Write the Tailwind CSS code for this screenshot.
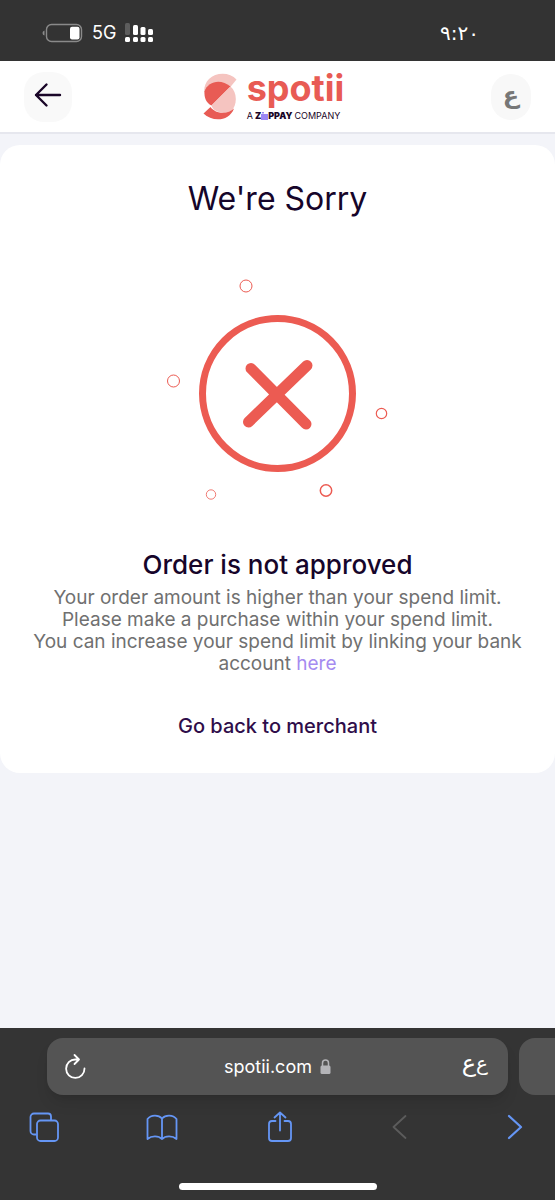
<!DOCTYPE html>
<html lang="en">
<head>
<meta charset="utf-8">
<meta name="viewport" content="width=device-width, initial-scale=1">
<title>Spotii</title>
<script src="https://cdn.jsdelivr.net/npm/@tailwindcss/browser@4"></script>
</head>
<body class="flex min-h-screen flex-col bg-[#f3f4f9] font-['Inter','DejaVu_Sans',sans-serif]">

<!-- Phone status bar -->
<div class="flex h-[61px] items-center justify-between bg-[#333333] pt-1 pr-19 pl-[42px] text-white">
  <div class="flex items-center gap-2">
    <svg class="h-5 w-[42px]" viewBox="0 0 42 20" fill="none" aria-label="Battery" role="img">
      <path d="M2.5 7.5Q.5 8 .5 10T2.500 12.500Z" fill="#8a8a8a"/>
      <rect x="4.500" y="1.500" width="35" height="17" rx="5" stroke="#8a8a8a" stroke-width="1.400"/>
      <rect x="28" y="3.700" width="9.500" height="12.800" rx="2" fill="#fff"/>
    </svg>
    <span class="text-lg">5G</span>
    <svg class="h-5 w-[30px]" viewBox="0 0 30 20" fill="#fff" aria-label="Signal" role="img">
      <rect x="1" y="0" width="5" height="12" rx="1.500" fill="#5d5d5d"/>
      <rect x="9" y="2" width="5" height="10" rx="1.500"/>
      <rect x="16.500" y="4" width="5" height="8" rx="1.500"/>
      <rect x="24" y="6" width="5" height="6" rx="1.500"/>
      <rect x="1" y="14" width="5" height="5" rx="1.500"/>
      <rect x="9" y="14" width="5" height="5" rx="1.500"/>
      <rect x="16.500" y="14" width="5" height="5" rx="1.500"/>
      <rect x="24" y="14" width="5" height="5" rx="1.500"/>
    </svg>
  </div>
  <span class="font-['DejaVu_Sans',sans-serif] text-xl">٩:٢٠</span>
</div>

<!-- Site header -->
<header class="grid h-[73px] grid-cols-[1fr_auto_1fr] items-center border-b-2 border-[#e6e7ee] bg-white px-6">
  <button type="button" aria-label="Back" class="flex h-[50px] w-12 items-center justify-center rounded-[20px] bg-[#f9f9f9]">
    <svg class="mb-1 h-7 w-7" viewBox="0 0 28 28" fill="none" stroke="#1a0628" stroke-width="2.400" stroke-linecap="round" stroke-linejoin="round"><path d="M26 14H2M12.500 3.500 2 14l10.500 10.500"/></svg>
  </button>
  <a href="#" aria-label="Spotii, a Zippay company" class="mr-2 flex items-center gap-2">
    <svg class="h-12 w-9" viewBox="0 0 36 48">
      <path d="M33.500 6.500C27-1 13-1 6 6C2 10 .5 16 1.500 20C5 10 15 7 24 13L27 14.500Z" fill="#f5c4c0"/>
      <path d="M1.500 18.500C5 8 18 5.500 27.500 13.500L8.500 32.500C3 30 1 24 1.500 18.500Z" fill="#e85b54"/>
      <path d="M27.500 13.500 8.500 32.500C10 38.500 20 42 28 38C34.500 33 34.500 19 27.500 13.500Z" fill="#f5c4c0"/>
      <path d="M7.500 34 .5 40.500C9 49 26 49 31 35.500C25 41.500 13 41.500 7.500 34Z" fill="#e85b54"/>
    </svg>
    <span class="flex flex-col">
      <span class="text-4xl leading-8 font-bold text-[#e85b54]">spotii</span>
      <span class="flex items-center gap-[2px] pt-[6px] text-[9px] leading-3 text-[#1a0628]">
        <span>A</span>
        <span class="flex items-center font-black">Z<svg class="h-2 w-[7px]" viewBox="0 0 7 8" fill="#9b87f5"><rect x="0" y="2" width="7" height="6"/><rect x="1" y="0" width="2" height="1.500"/></svg>PPAY</span>
        <span>COMPANY</span>
      </span>
    </span>
  </a>
  <button type="button" aria-label="العربية" class="flex h-[46px] w-10 items-center justify-center justify-self-end rounded-full bg-[#f8f8f8] pb-1 font-['DejaVu_Sans',sans-serif] text-2xl font-bold text-[#777777]">ع</button>
</header>

<!-- Result card -->
<main class="mt-[11px] flex flex-col items-center rounded-[20px] bg-white px-8 pt-8 pb-8 text-center">
  <h1 class="text-[32px] leading-11 text-[#16052a]">We're Sorry</h1>
  <svg class="mt-10 h-[250px] w-[260px]" viewBox="-2 1 260 250" fill="none" stroke="#ec5b52" aria-hidden="true">
    <circle cx="127.500" cy="133.500" r="75" stroke-width="7"/>
    <path d="M101 108.500 156 164M157 105.500 98.500 162" stroke-width="11" stroke-linecap="round"/>
    <circle cx="96" cy="26" r="6" stroke-width="1"/>
    <circle cx="23.500" cy="121" r="6" stroke-width="1"/>
    <circle cx="231.500" cy="153.500" r="5.200" stroke-width="1.200"/>
    <circle cx="61" cy="234.500" r="4.700" stroke-width=".8"/>
    <circle cx="176" cy="230.500" r="5.700" stroke-width="1.500"/>
  </svg>
  <h2 class="mt-9 text-[26px] leading-9 font-medium text-[#16052a]">Order is not approved</h2>
  <p class="mt-1 text-[19px] leading-[22px] text-[#707070]">Your order amount is higher than your spend limit.<br>Please make a purchase within your spend limit.<br>You can increase your spend limit by linking your bank account <a href="#" class="inline-block text-[#a58bf0]">here</a></p>
  <a href="#" class="mt-9 text-xl leading-[30px] font-medium text-[#2f0d4a]">Go back to merchant</a>
</main>

<!-- Browser toolbar -->
<footer class="mt-auto flex h-[172px] flex-col bg-[#343434] pt-[10px]">
  <div class="flex h-[57px] gap-[11px] pl-[47px]">
    <div class="grid flex-1 grid-cols-[1fr_auto_1fr] items-center rounded-2xl bg-[#545454] px-4 text-white shadow-lg">
      <button type="button" aria-label="Reload" class="justify-self-start">
        <svg class="h-7 w-6" viewBox="0 0 24 28" fill="none" stroke="#fff" stroke-width="1.800" stroke-linecap="round" stroke-linejoin="round"><path d="M21.500 15.500A9.200 9.200 0 1 1 12.300 6.500H16M11.500 2 16 6.500 11.500 11"/></svg>
      </button>
      <div class="flex items-center gap-2">
        <span class="text-lg">spotii.com</span>
        <svg class="h-4 w-[11px]" viewBox="0 0 11 16" aria-label="Secure" role="img"><path d="M2.500 7V4a3 3 0 0 1 6 0V7" fill="none" stroke="#b4b4b8" stroke-width="1.500"/><rect x=".5" y="6.500" width="10" height="8.500" rx="1.500" fill="#b4b4b8"/></svg>
      </div>
      <button type="button" aria-label="Page settings" class="flex items-center justify-self-end pr-1 pb-2 font-['DejaVu_Sans',sans-serif]"><span class="text-2xl">ع</span><span class="text-xl">ع</span></button>
    </div>
    <div class="w-9 rounded-l-2xl bg-[#545454]"></div>
  </div>
  <nav class="mt-4 flex items-center justify-between pr-6 pl-7 text-[#6596f5]">
    <button type="button" aria-label="Tabs"><svg class="h-8 w-8" viewBox="0 0 32 32" fill="none" stroke="currentColor" stroke-width="1.800" stroke-linejoin="round"><path d="M8.500 23.500H6A3.500 3.500 0 0 1 2.500 20V6A3.500 3.500 0 0 1 6 2.500H20A3 3 0 0 1 23 5.500V9"/><rect x="9" y="9.500" width="21" height="20.500" rx="3.500"/></svg></button>
    <button type="button" aria-label="Bookmarks"><svg class="h-8 w-8" viewBox="0 0 32 32" fill="none" stroke="currentColor" stroke-width="1.800" stroke-linecap="round" stroke-linejoin="round"><path d="M16 7.500C12.500 3.500 5 3.500 1.500 8V28C5.500 24.500 12.500 24.500 16 28C19.500 24.500 26.500 24.500 30.500 28V8C27 3.500 19.500 3.500 16 7.500V28"/></svg></button>
    <button type="button" aria-label="Share"><svg class="h-8 w-8" viewBox="0 0 32 32" fill="none" stroke="currentColor" stroke-width="1.800" stroke-linecap="round" stroke-linejoin="round"><path d="M11.500 10H8A3 3 0 0 0 5 13V27A3 3 0 0 0 8 30H24A3 3 0 0 0 27 27V13A3 3 0 0 0 24 10H20.500M16 19.500V1.500M10.500 6.500 16 1.500 21.500 6.500"/></svg></button>
    <button type="button" aria-label="Previous page" disabled class="text-[#5c5c5c]"><svg class="h-8 w-8" viewBox="0 0 32 32" fill="none" stroke="currentColor" stroke-width="1.800" stroke-linecap="round" stroke-linejoin="round"><path d="M24.500 5 12.500 16 24.500 27"/></svg></button>
    <button type="button" aria-label="Next page"><svg class="h-8 w-8" viewBox="0 0 32 32" fill="none" stroke="currentColor" stroke-width="2.200" stroke-linecap="round" stroke-linejoin="round"><path d="M10 5 22 16 10 27"/></svg></button>
  </nav>
  <div class="mx-auto mt-auto mb-[10px] h-[7px] w-[198px] rounded-full bg-white"></div>
</footer>
</body>
</html>
